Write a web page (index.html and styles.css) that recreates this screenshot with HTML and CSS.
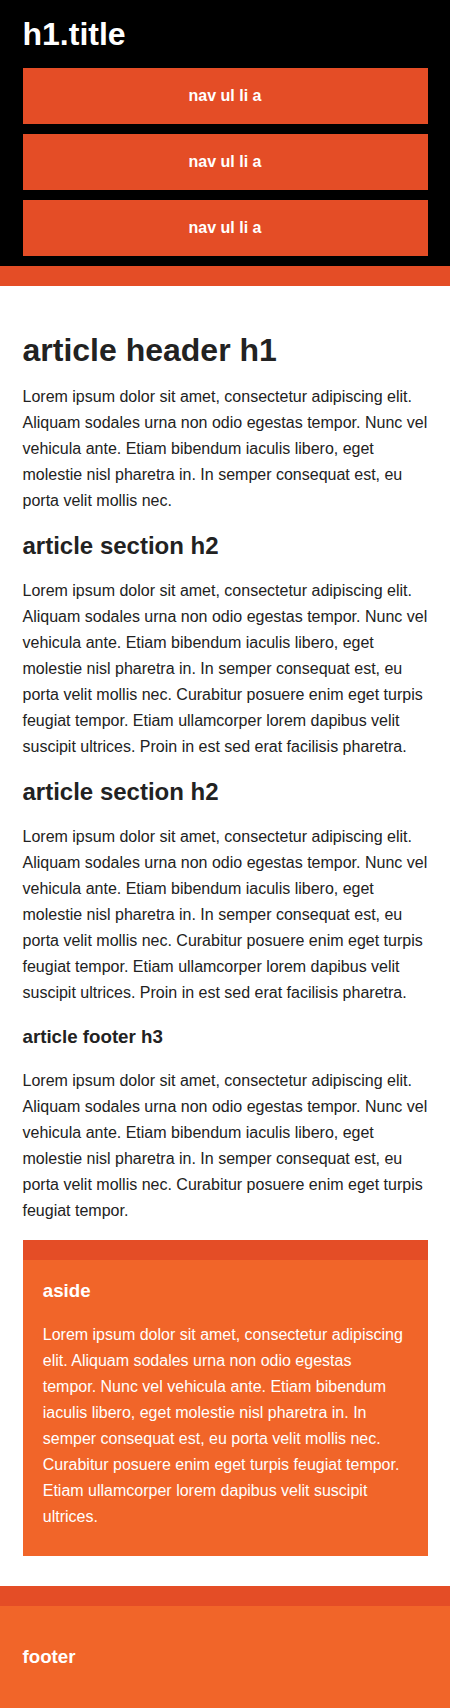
FILE: index.html
```html
<!DOCTYPE html>
<html lang="en">
<head>
<meta charset="utf-8">
<title>h1.title</title>
<link rel="stylesheet" href="styles.css">
</head>
<body>
<div class="header-container">
  <header class="wrapper">
    <h1 class="title">h1.title</h1>
    <nav class="nav">
      <ul class="nav-list">
        <li class="nav-item"><a class="nav-link" href="#">nav ul li a</a></li>
        <li class="nav-item"><a class="nav-link" href="#">nav ul li a</a></li>
        <li class="nav-item"><a class="nav-link" href="#">nav ul li a</a></li>
      </ul>
    </nav>
  </header>
</div>

<div class="main-container">
  <div class="main wrapper">
    <article class="article">
      <header>
        <h1 class="article-h1">article header h1</h1>
        <p class="para">Lorem ipsum dolor sit amet, consectetur adipiscing elit. Aliquam sodales urna non odio egestas tempor. Nunc vel vehicula ante. Etiam bibendum iaculis libero, eget molestie nisl pharetra in. In semper consequat est, eu porta velit mollis nec.</p>
      </header>
      <section>
        <h2 class="article-h2">article section h2</h2>
        <p class="para">Lorem ipsum dolor sit amet, consectetur adipiscing elit. Aliquam sodales urna non odio egestas tempor. Nunc vel vehicula ante. Etiam bibendum iaculis libero, eget molestie nisl pharetra in. In semper consequat est, eu porta velit mollis nec. Curabitur posuere enim eget turpis feugiat tempor. Etiam ullamcorper lorem dapibus velit suscipit ultrices. Proin in est sed erat facilisis pharetra.</p>
      </section>
      <section>
        <h2 class="article-h2">article section h2</h2>
        <p class="para">Lorem ipsum dolor sit amet, consectetur adipiscing elit. Aliquam sodales urna non odio egestas tempor. Nunc vel vehicula ante. Etiam bibendum iaculis libero, eget molestie nisl pharetra in. In semper consequat est, eu porta velit mollis nec. Curabitur posuere enim eget turpis feugiat tempor. Etiam ullamcorper lorem dapibus velit suscipit ultrices. Proin in est sed erat facilisis pharetra.</p>
      </section>
      <footer>
        <h3 class="article-h3">article footer h3</h3>
        <p class="para">Lorem ipsum dolor sit amet, consectetur adipiscing elit. Aliquam sodales urna non odio egestas tempor. Nunc vel vehicula ante. Etiam bibendum iaculis libero, eget molestie nisl pharetra in. In semper consequat est, eu porta velit mollis nec. Curabitur posuere enim eget turpis feugiat tempor.</p>
      </footer>
    </article>

    <aside class="aside">
      <h3 class="aside-h3">aside</h3>
      <p class="para">Lorem ipsum dolor sit amet, consectetur adipiscing elit. Aliquam sodales urna non odio egestas tempor. Nunc vel vehicula ante. Etiam bibendum iaculis libero, eget molestie nisl pharetra in. In semper consequat est, eu porta velit mollis nec. Curabitur posuere enim eget turpis feugiat tempor. Etiam ullamcorper lorem dapibus velit suscipit ultrices.</p>
    </aside>
  </div>
</div>

<div class="footer-container">
  <footer class="wrapper site-footer">
    <h3 class="footer-h3">footer</h3>
  </footer>
</div>
</body>
</html>
```

FILE: styles.css
```css
html, body {
  margin: 0;
  padding: 0;
}

body {
  font: 16px/26px "Liberation Sans", Arial, Helvetica, sans-serif;
  color: #222;
  background: #fff;
}

.wrapper {
  width: 90%;
  margin: 0 5%;
}

.header-container {
  background: #000;
  border-bottom: 20px solid #e44d26;
  overflow: hidden;
}

.title {
  color: #fff;
  font-size: 32px;
  line-height: 26px;
  margin: 21px 0;
}

.nav-list {
  margin: 0;
  padding: 0;
  list-style: none;
}

.nav-item {
  margin: 0;
  padding: 0;
}

.nav-link {
  display: block;
  margin-bottom: 10px;
  padding: 15px 0;
  text-align: center;
  text-decoration: none;
  font-weight: bold;
  color: #fff;
  background: #e44d26;
}

.main {
  padding: 30px 0;
}

.article-h1 {
  font-size: 32px;
  line-height: 26px;
  margin: 21px 0;
}

.article-h2 {
  font-size: 24px;
  line-height: 26px;
  margin: 19px 0;
}

.article-h3 {
  font-size: 18.72px;
  line-height: 26px;
  margin: 18px 0;
}

.para {
  margin: 16px 0;
}

.aside {
  display: block;
  color: #fff;
  background: #f16529;
  border-top: 20px solid #e44d26;
  padding: 0 5% 10px;
  overflow: hidden;
}

.aside-h3 {
  font-size: 18.72px;
  line-height: 26px;
  margin: 18px 0;
}

.footer-container {
  background: #f16529;
  border-top: 20px solid #e44d26;
}

.site-footer {
  color: #fff;
  padding: 20px 0;
}

.footer-h3 {
  font-size: 18.72px;
  line-height: 26px;
  margin: 18px 0;
}
```
